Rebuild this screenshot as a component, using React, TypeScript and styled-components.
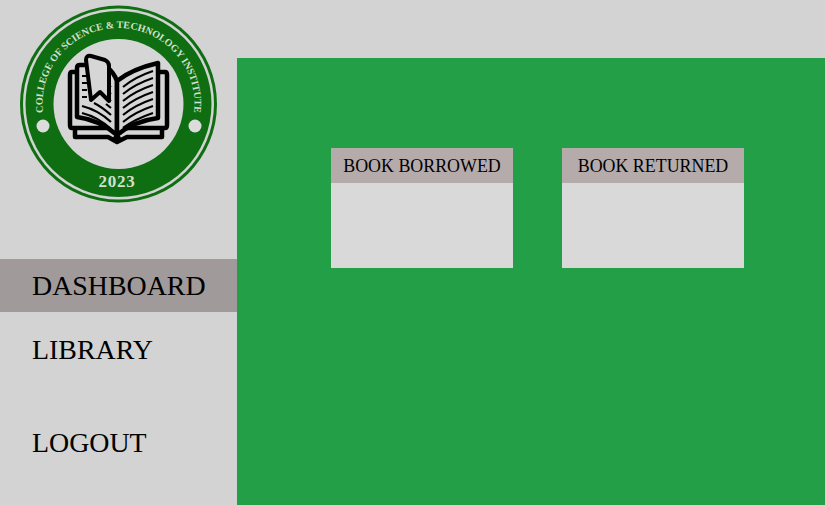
import styled, { createGlobalStyle } from 'styled-components';

const GlobalStyle = createGlobalStyle`
  html, body {
    margin: 0;
    padding: 0;
    height: 100%;
    overflow: hidden;
  }

  #root {
    height: 100%;
  }
`;

// ── Page shell ────────────────────────────────────────────────────────────────

const Page = styled.div`
  display: flex;
  width: 825px;
  height: 505px;
  background: #d3d3d3;
  font-family: 'Liberation Serif', 'Times New Roman', serif;
  color: #000;
`;

const Sidebar = styled.aside`
  width: 237px;
  flex-shrink: 0;
  display: flex;
  flex-direction: column;
`;

const LogoWrap = styled.div`
  height: 259px;
  padding: 5px 0 0 20px;
  box-sizing: border-box;
`;

const Nav = styled.nav`
  display: flex;
  flex-direction: column;
`;

const NavItem = styled.a<{ $active?: boolean; $gap?: number }>`
  display: flex;
  align-items: center;
  height: 53px;
  padding-left: 32px;
  margin-top: ${({ $gap }) => $gap ?? 0}px;
  font-size: 27.9px;
  background: ${({ $active }) => ($active ? '#a09b9a' : 'transparent')};
  cursor: pointer;
`;

const MainColumn = styled.div`
  flex: 1;
  display: flex;
  flex-direction: column;
`;

const TopBar = styled.header`
  height: 58px;
  flex-shrink: 0;
`;

const Content = styled.main`
  flex: 1;
  display: flex;
  align-items: flex-start;
  gap: 49px;
  padding: 90px 0 0 94px;
  background: #239f47;
`;

// ── Stat cards ────────────────────────────────────────────────────────────────

const Card = styled.section`
  width: 182px;
  height: 120px;
  background: #d9d9d9;
`;

const CardHeader = styled.h2`
  display: flex;
  align-items: center;
  justify-content: center;
  box-sizing: border-box;
  height: 35px;
  margin: 0;
  padding-top: 1px;
  background: #b5abab;
  font-size: 17.9px;
  font-weight: 400;
`;

const LogoSvg = styled.svg`
  display: block;
  width: 198px;
  height: 198px;
`;

const SealText = styled.text`
  font-family: 'Liberation Serif', 'Times New Roman', serif;
  font-weight: 700;
  fill: #d3e0cf;
`;

// ── Logo ──────────────────────────────────────────────────────────────────────

const Logo = () => (
  <LogoSvg viewBox="0 0 198 198">
    <defs>
      <path id="sealArc" d="M 23.8 113 A 76 76 0 1 1 173.2 113" />
    </defs>
    <circle cx="98.5" cy="99" r="98.5" fill="#0f6e12" />
    <circle cx="98.5" cy="99" r="95.5" fill="#d3d3d3" />
    <circle cx="98.5" cy="99" r="93" fill="#0f6e12" />
    <circle cx="98.5" cy="99" r="65" fill="#d6d6d6" />
    <circle cx="23" cy="121" r="6.5" fill="#dcdcdc" />
    <circle cx="175" cy="121" r="6.5" fill="#dcdcdc" />
    <SealText fontSize="10" textAnchor="middle">
      <textPath href="#sealArc" startOffset="50%">COLLEGE OF SCIENCE &amp; TECHNOLOGY INSTITUTE</textPath>
    </SealText>
    <SealText x="97" y="182" fontSize="17" textAnchor="middle" letterSpacing="0.7">
      2023
    </SealText>

    {/* back covers and base */}
    <path d="M57 67H52Q50 67 50 70V120Q50 123 52 123H90" fill="none" stroke="#000" strokeWidth="4.5" strokeLinejoin="round" />
    <path d="M138 67H145Q147 67 147 70V120Q147 123 145 123H105" fill="none" stroke="#000" strokeWidth="4.5" strokeLinejoin="round" />
    <path d="M55 123V132H88L97 137L107 132H142V123" fill="none" stroke="#000" strokeWidth="4.5" strokeLinejoin="round" />
    {/* pages */}
    <path d="M65 60H60Q57 60 57 63V112Q80 115 97 130V76Q94 68 88 63" fill="#d6d6d6" stroke="#000" strokeWidth="4.5" strokeLinejoin="round" />
    <path d="M97 76Q112 64 138 58V113Q114 116 97 130Z" fill="#d6d6d6" stroke="#000" strokeWidth="4.5" strokeLinejoin="round" />
    {/* right page lines */}
    <g fill="none" stroke="#000" strokeWidth="2.2">
      <path d="M103 82Q115 72 133 66" />
      <path d="M103 89Q115 79 133 73" />
      <path d="M103 96Q115 86 133 80" />
      <path d="M103 103Q115 93 133 87" />
      <path d="M103 110Q115 100 133 94" />
      <path d="M103 117Q115 107 133 101" />
      <path d="M103 123Q115 114 133 108" />
      {/* left page lines */}
      <path d="M91 124Q78 112 62 108" />
      <path d="M91 117Q78 105 62 101" />
      <path d="M91 110Q82 102 74 98" />
      <path d="M91 103L86 99" />
      <path d="M91 96L86 92" />
      <path d="M91 89L86 85" />
      <path d="M91 82L86 78" />
      <path d="M62 92H67M62 85H67M62 78H67M62 71H67" />
    </g>
    {/* bookmark */}
    <path d="M66 55Q66 50 71 51L85 55Q89 57 89 61V96L80 87L71 95Z" fill="#d6d6d6" stroke="#000" strokeWidth="4" strokeLinejoin="round" />
    <circle cx="97" cy="134" r="4" fill="#000" />
  </LogoSvg>
);

export default function App() {
  return (
    <>
      <GlobalStyle />
      <Page>
        <Sidebar>
          <LogoWrap>
            <Logo />
          </LogoWrap>
          <Nav>
            <NavItem $active>DASHBOARD</NavItem>
            <NavItem $gap={11}>LIBRARY</NavItem>
            <NavItem $gap={40}>LOGOUT</NavItem>
          </Nav>
        </Sidebar>
        <MainColumn>
          <TopBar />
          <Content>
            <Card>
              <CardHeader>BOOK BORROWED</CardHeader>
            </Card>
            <Card>
              <CardHeader>BOOK RETURNED</CardHeader>
            </Card>
          </Content>
        </MainColumn>
      </Page>
    </>
  );
}
